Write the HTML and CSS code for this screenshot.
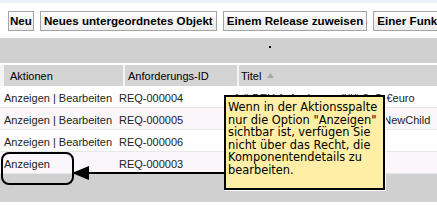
FILE: index.html
```html
<!DOCTYPE html>
<html lang="de">
<head>
<meta charset="utf-8">
<link rel="stylesheet" href="styles.css">
</head>
<body>
<div class="page">
  <div class="topstrip"></div>
  <div class="toolbar">
    <button class="btn btn-tight">Neu</button>
    <button class="btn">Neues untergeordnetes Objekt</button>
    <button class="btn">Einem Release zuweisen</button>
    <button class="btn">Einer Funktion zuweisen</button>
  </div>
  <div class="bar"><span class="dot"></span></div>
  <div class="thead">
    <div class="th th-first">Aktionen</div>
    <div class="th">Anforderungs-ID</div>
    <div class="th">Titel <svg class="sort" width="7" height="5" viewBox="0 0 7 5"><path d="M0 5 L3.5 0 L7 5 Z" fill="#a8a8a8"/></svg></div>
  </div>
  <div class="row">
    <div class="td">Anzeigen | Bearbeiten</div>
    <div class="td">REQ-000004</div>
    <div class="td">1 ä BEH Anforderung äöü ß @ €euro</div>
  </div>
  <div class="row row-alt">
    <div class="td">Anzeigen | Bearbeiten</div>
    <div class="td">REQ-000005</div>
    <div class="td">Untergeordnete Anforderung - NewChild</div>
  </div>
  <div class="row">
    <div class="td">Anzeigen | Bearbeiten</div>
    <div class="td">REQ-000006</div>
    <div class="td"></div>
  </div>
  <div class="row row-alt">
    <div class="td">Anzeigen</div>
    <div class="td">REQ-000003</div>
    <div class="td"></div>
  </div>
  <div class="footbar"></div>

  <div class="highlight"></div>
  <svg class="arrow" width="437" height="205" viewBox="0 0 437 205">
    <line x1="86" y1="173" x2="225" y2="173" stroke="#000" stroke-width="2"/>
    <path d="M72 173 L89 166 L89 180 Z" fill="#000"/>
  </svg>
  <div class="tooltip">Wenn in der Aktionsspalte<br>nur die Option "Anzeigen"<br>sichtbar ist, verfügen Sie<br>nicht über das Recht, die<br>Komponentendetails zu<br>bearbeiten.</div>
</div>
</body>
</html>
```

FILE: styles.css
```css
html, body {
  margin: 0;
  padding: 0;
  background: #ffffff;
}
.page {
  position: relative;
  width: 437px;
  height: 205px;
  overflow: hidden;
  font-family: "Liberation Sans", Arial, sans-serif;
  font-size: 11px;
  color: #222;
}
.topstrip {
  height: 3px;
  background: #eef0fb;
}
.toolbar {
  height: 35px;
  box-sizing: border-box;
  padding: 8px 0 0 8px;
  display: flex;
  gap: 6px;
  white-space: nowrap;
}
.btn {
  flex: none;
  height: 20px;
  margin: 0;
  padding: 0 3px;
  border: 1px solid #a4a4a4;
  background: linear-gradient(#fdfdfd, #ededed);
  font-family: "Liberation Sans", Arial, sans-serif;
  font-weight: bold;
  font-size: 11.6px;
  color: #000;
  line-height: 18px;
}
.btn-tight {
  padding: 0 1px;
}
.bar {
  height: 25px;
  background: #d0d0d0;
  position: relative;
}
.dot {
  display: block;
  width: 2px;
  height: 2px;
  background: #000;
  margin-left: 269px;
  position: relative;
  top: 8px;
}
.thead {
  margin-top: 2px;
  height: 21px;
  padding-left: 4px;
  display: grid;
  grid-template-columns: 119px 112px 1fr;
  column-gap: 2px;
  background: #f4f4f4;
}
.th {
  background: #d4d4d4;
  color: #000;
  display: flex;
  align-items: center;
  padding-left: 3px;
}
.th-first {
  padding-left: 6px;
}
.th:last-child {
  padding-left: 2px;
}
.sort {
  margin-left: 6px;
  margin-top: -1px;
}
.row {
  height: 22px;
  box-sizing: border-box;
  border-bottom: 1px solid #e8e8e8;
  padding-top: 3px;
  display: grid;
  grid-template-columns: 115px 115px 1fr;
  align-items: center;
  background: #ffffff;
}
.row-alt {
  background: #faf6fa;
}
.td {
  padding-left: 4px;
  white-space: nowrap;
  overflow: hidden;
}
.footbar {
  height: 28px;
  background: #d0d0d0;
}
.highlight {
  position: absolute;
  left: 1px;
  top: 152px;
  width: 73px;
  height: 33px;
  box-sizing: border-box;
  border: 2px solid #000;
  border-radius: 8px;
}
.arrow {
  position: absolute;
  left: 0;
  top: 0;
  pointer-events: none;
}
.tooltip {
  position: absolute;
  left: 224px;
  top: 95px;
  width: 161px;
  height: 95px;
  box-sizing: border-box;
  border: 2px solid #000;
  background: #ffefa6;
  box-shadow: 1px 1px 0 #fff;
  padding: 4px 2px 0 2px;
  font-family: "DejaVu Sans", Verdana, sans-serif;
  font-size: 11.4px;
  line-height: 12.6px;
  color: #000;
  white-space: nowrap;
}
```
